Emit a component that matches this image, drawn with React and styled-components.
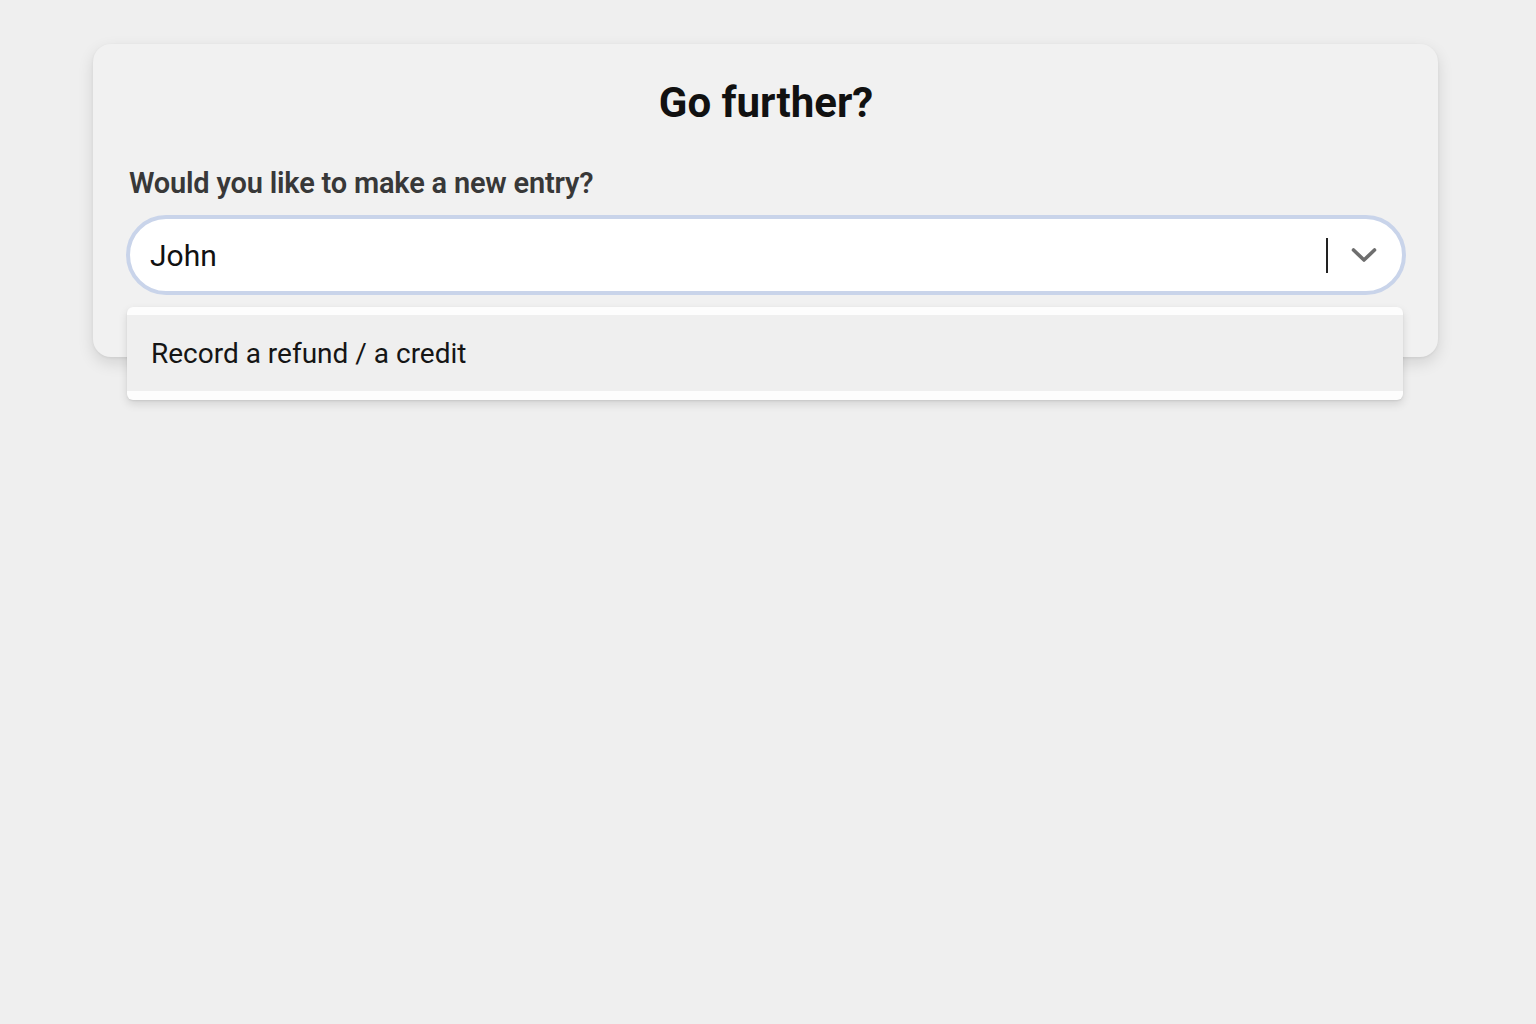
import React from "react";
import styled, { createGlobalStyle } from "styled-components";

const GlobalStyle = createGlobalStyle`
  html, body {
    margin: 0;
    padding: 0;
    background: #efefef;
    font-family: Roboto, "Noto Sans", "Liberation Sans", sans-serif;
  }
  #root {
    min-height: 1024px;
  }
`;

const Page = styled.div`
  min-height: 1024px;
  background: #efefef;
  padding: 44px 98px 0 93px;
  box-sizing: border-box;
`;

const Card = styled.section`
  position: relative;
  background: #f1f1f1;
  border-radius: 18px;
  box-shadow: 0 6px 16px rgba(0, 0, 0, 0.12), 0 1px 3px rgba(0, 0, 0, 0.06);
  padding: 34px 32px 62px 33px;
  height: 313px;
  box-sizing: border-box;
`;

const Title = styled.h1`
  margin: 0;
  text-align: center;
  font-size: 42px;
  font-weight: 700;
  color: #111;
  line-height: 50px;
`;

const Label = styled.label`
  display: block;
  margin: 37px 0 0 3px;
  font-size: 29px;
  font-weight: 600;
  color: #383838;
  line-height: 36px;
  letter-spacing: -0.2px;
`;

const SelectBox = styled.div`
  margin-top: 14px;
  height: 80px;
  box-sizing: border-box;
  border: 4px solid #c9d4ea;
  border-radius: 40px;
  background: #fff;
  display: flex;
  align-items: center;
  padding: 0 25px 0 20px;
`;

const Value = styled.span`
  flex: 1;
  font-size: 30px;
  color: #111;
`;

const Caret = styled.span`
  width: 2px;
  height: 35px;
  background: #222;
  margin-right: 23px;
`;

const Chevron = styled.svg`
  width: 26px;
  height: 16px;
  display: block;
`;

const Menu = styled.ul`
  position: absolute;
  left: 34px;
  right: 35px;
  top: 263px;
  margin: 0;
  padding: 8px 0 9px;
  list-style: none;
  background: #fdfdfd;
  border-radius: 6px;
  box-shadow: 0 4px 10px rgba(0, 0, 0, 0.12), 0 1px 2px rgba(0, 0, 0, 0.08);
`;

const Option = styled.li`
  height: 76px;
  display: flex;
  align-items: center;
  padding-left: 24px;
  background: ${(p) => (p.$active ? "#efefef" : "transparent")};
  font-size: 28px;
  color: #151515;
`;

export default function App() {
  return (
    <>
      <GlobalStyle />
      <Page>
        <Card>
          <Title>Go further?</Title>
          <Label>Would you like to make a new entry?</Label>
          <SelectBox>
            <Value>John</Value>
            <Caret />
            <Chevron viewBox="0 0 26 16">
              <path
                d="M2.5 3 L13 13 L23.5 3"
                fill="none"
                stroke="#6e6e6e"
                strokeWidth="3.6"
                strokeLinecap="round"
                strokeLinejoin="round"
              />
            </Chevron>
          </SelectBox>
          <Menu>
            <Option $active>Record a refund / a credit</Option>
          </Menu>
        </Card>
      </Page>
    </>
  );
}
